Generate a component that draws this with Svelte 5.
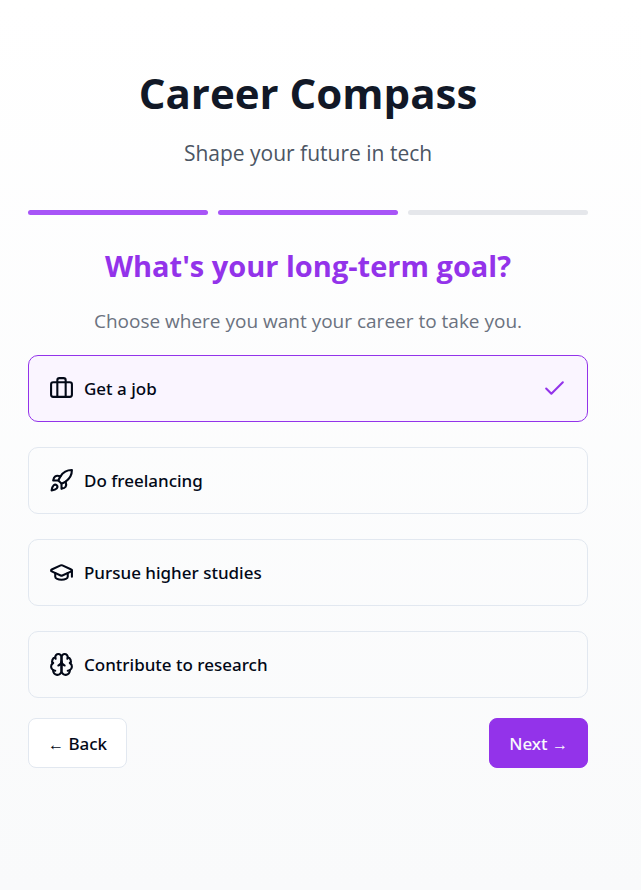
<script>
  const steps = [1, 2, 3];
  const currentStep = 2;

  const goals = [
    {
      id: 'job',
      label: 'Get a job',
      paths: ['M16 20V4a2 2 0 0 0-2-2h-4a2 2 0 0 0-2 2v16', 'M4 6h16a2 2 0 0 1 2 2v10a2 2 0 0 1-2 2H4a2 2 0 0 1-2-2V8a2 2 0 0 1 2-2z']
    },
    {
      id: 'freelance',
      label: 'Do freelancing',
      paths: [
        'M4.5 16.5c-1.5 1.26-2 5-2 5s3.74-.5 5-2c.71-.84.7-2.13-.09-2.91a2.18 2.18 0 0 0-2.91-.09z',
        'm12 15-3-3a22 22 0 0 1 2-3.95A12.88 12.88 0 0 1 22 2c0 2.72-.78 7.5-6 11a22.35 22.35 0 0 1-4 2z',
        'M9 12H4s.55-3.03 2-4c1.62-1.08 5 0 5 0',
        'M12 15v5s3.03-.55 4-2c1.08-1.62 0-5 0-5'
      ]
    },
    {
      id: 'studies',
      label: 'Pursue higher studies',
      paths: [
        'M21.42 10.922a1 1 0 0 0-.019-1.838L12.83 5.18a2 2 0 0 0-1.66 0L2.6 9.08a1 1 0 0 0 0 1.832l8.57 3.908a2 2 0 0 0 1.66 0z',
        'M22 10v6',
        'M6 12.5V16a6 3 0 0 0 12 0v-3.5'
      ]
    },
    {
      id: 'research',
      label: 'Contribute to research',
      paths: [
        'M12 5a3 3 0 1 0-5.997.125 4 4 0 0 0-2.526 5.77 4 4 0 0 0 .556 6.588A4 4 0 1 0 12 18Z',
        'M12 5a3 3 0 1 1 5.997.125 4 4 0 0 1 2.526 5.77 4 4 0 0 1-.556 6.588A4 4 0 1 1 12 18Z',
        'M15 13a4.5 4.5 0 0 1-3-4 4.5 4.5 0 0 1-3 4',
        'M17.599 6.5a3 3 0 0 0 .399-1.375',
        'M6.003 5.125A3 3 0 0 0 6.401 6.5',
        'M3.477 10.896a4 4 0 0 1 .585-.396',
        'M19.938 10.5a4 4 0 0 1 .585.396',
        'M6 18a4 4 0 0 1-1.967-.516',
        'M19.967 17.484A4 4 0 0 1 18 18'
      ]
    }
  ];

  let selected = $state('job');
</script>

<main class="page">
  <div class="wizard">
    <header>
      <h1>Career Compass</h1>
      <p class="tagline">Shape your future in tech</p>
    </header>

    <div class="steps" role="img" aria-label="Step {currentStep} of {steps.length}">
      {#each steps as step}
        <span class="step" class:done={step <= currentStep}></span>
      {/each}
    </div>

    <h2 id="question">What's your long-term goal?</h2>
    <p class="hint">Choose where you want your career to take you.</p>

    <div class="options" role="radiogroup" aria-labelledby="question">
      {#each goals as goal}
        <label class="option" class:selected={selected === goal.id}>
          <input type="radio" name="goal" value={goal.id} bind:group={selected} />
          <svg class="icon" viewBox="0 0 24 24" aria-hidden="true">
            {#each goal.paths as d}
              <path {d} />
            {/each}
          </svg>
          <span class="label">{goal.label}</span>
          {#if selected === goal.id}
            <svg class="icon check" viewBox="0 0 24 24" aria-hidden="true">
              <path d="M20 6 9 17l-5-5" />
            </svg>
          {/if}
        </label>
      {/each}
    </div>

    <nav class="actions">
      <button type="button" class="back"><span class="arrow">←</span> Back</button>
      <button type="button" class="next">Next <span class="arrow">→</span></button>
    </nav>
  </div>
</main>

<style>
  :global(body) {
    margin: 0;
  }

  .page {
    box-sizing: border-box;
    min-height: 100vh;
    padding: 60px 53px 60px 28px;
    background: linear-gradient(to bottom, #ffffff, #f9fafb);
    color: #020817;
    font-family: 'Segoe UI', 'Open Sans', 'Noto Sans', sans-serif;
  }

  .wizard {
    max-width: 840px;
    margin: 0 auto;
  }

  h1,
  h2,
  p {
    margin: 0;
    text-align: center;
  }

  h1 {
    color: #111827;
    font-size: 42px;
    font-weight: 700;
    line-height: 66px;
  }

  .tagline {
    margin-top: 10px;
    color: #4b5563;
    font-size: 21px;
    line-height: 34px;
  }

  .steps {
    display: flex;
    gap: 10px;
    margin-top: 40px;
  }

  .step {
    flex: 1;
    height: 5px;
    border-radius: 3px;
    background: #e5e7eb;
  }

  .step.done {
    background: #a855f7;
  }

  h2 {
    margin-top: 30px;
    color: #9333ea;
    font-size: 29px;
    font-weight: 700;
    line-height: 42px;
  }

  .hint {
    margin-top: 17px;
    color: #6b7280;
    font-size: 19px;
    line-height: 34px;
  }

  .options {
    display: flex;
    flex-direction: column;
    gap: 25px;
    margin-top: 17px;
  }

  .option {
    position: relative;
    display: flex;
    align-items: center;
    gap: 10px;
    padding: 20px;
    border: 1px solid #e2e8f0;
    border-radius: 10px;
    cursor: pointer;
  }

  .option.selected {
    border-color: #9333ea;
    background: #faf5ff;
  }

  .option input {
    position: absolute;
    inset: 0;
    margin: 0;
    opacity: 0;
    cursor: pointer;
  }

  .label,
  button {
    font-family: 'Segoe UI', 'Noto Sans', 'Open Sans', sans-serif;
    font-size: 17px;
    font-weight: 500;
    line-height: 25px;
  }

  .label {
    flex: 1;
  }

  .icon {
    flex: none;
    width: 25px;
    height: 25px;
    fill: none;
    stroke: currentColor;
    stroke-width: 2;
    stroke-linecap: round;
    stroke-linejoin: round;
  }

  .check {
    color: #9333ea;
  }

  .actions {
    display: flex;
    justify-content: space-between;
    margin-top: 20px;
  }

  button {
    padding: 12px 19px 11px;
    border: 1px solid #e2e8f0;
    border-radius: 8px;
    background: #ffffff;
    color: inherit;
    cursor: pointer;
  }

  .next {
    border-color: #9333ea;
    background: #9333ea;
    color: #f8fafc;
  }

  .arrow {
    font-family: 'Segoe UI', 'Liberation Sans', sans-serif;
    font-size: 16px;
    line-height: 1;
  }
</style>
